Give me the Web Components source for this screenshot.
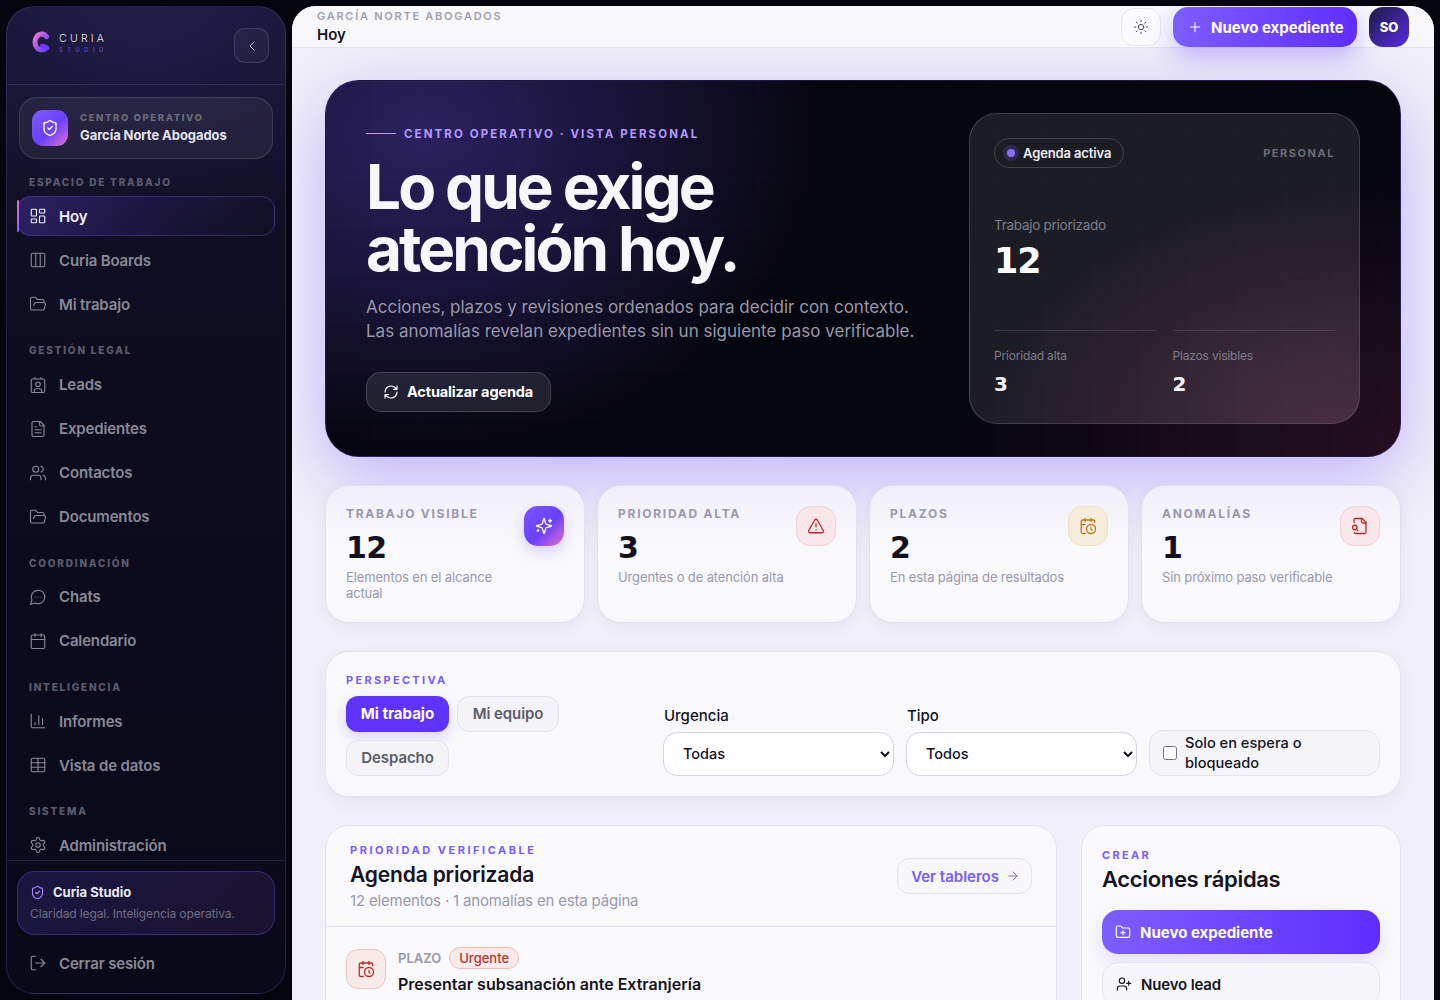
<!DOCTYPE html>
<html lang="es">
<head>
<meta charset="utf-8">
<title>Curia Studio</title>
<style>
    html, body { margin: 0; height: 100%; }
    body {
        background: #05050f;
        font-family: "Inter", "Noto Sans", sans-serif;
        overflow: hidden;
    }
</style>
</head>
<body>
<curia-app></curia-app>

<script>
(function() {
    'use strict';

    const FONT = '"Inter", "Noto Sans", sans-serif';

    const ICONS = {
        dashboard: '<rect x="3" y="3" width="7" height="9" rx="1"/><rect x="14" y="3" width="7" height="5" rx="1"/><rect x="14" y="12" width="7" height="9" rx="1"/><rect x="3" y="16" width="7" height="5" rx="1"/>',
        columns: '<rect x="3" y="3" width="18" height="18" rx="2"/><path d="M9 3v18M15 3v18"/>',
        folderOpen: '<path d="m6 14 1.5-2.9A2 2 0 0 1 9.24 10H20a2 2 0 0 1 1.94 2.5l-1.54 6a2 2 0 0 1-1.95 1.5H4a2 2 0 0 1-2-2V5a2 2 0 0 1 2-2h3.9a2 2 0 0 1 1.69.9l.81 1.2a2 2 0 0 0 1.67.9H18a2 2 0 0 1 2 2v2"/>',
        contact: '<path d="M16 2v2M8 2v2"/><rect x="3" y="4" width="18" height="18" rx="2"/><circle cx="12" cy="11" r="3"/><path d="M7 22v-2a3 3 0 0 1 3-3h4a3 3 0 0 1 3 3v2"/>',
        file: '<path d="M15 2H6a2 2 0 0 0-2 2v16a2 2 0 0 0 2 2h12a2 2 0 0 0 2-2V7Z"/><path d="M14 2v4a2 2 0 0 0 2 2h4M10 9H8M16 13H8M16 17H8"/>',
        users: '<path d="M16 21v-2a4 4 0 0 0-4-4H6a4 4 0 0 0-4 4v2"/><circle cx="9" cy="7" r="4"/><path d="M22 21v-2a4 4 0 0 0-3-3.87M16 3.13a4 4 0 0 1 0 7.75"/>',
        chat: '<path d="M7.9 20A9 9 0 1 0 4 16.1L2 22Z"/><path d="M8 12h.01M12 12h.01M16 12h.01"/>',
        calendar: '<rect x="3" y="4" width="18" height="18" rx="2"/><path d="M16 2v4M8 2v4M3 10h18"/>',
        chart: '<path d="M3 3v16a2 2 0 0 0 2 2h16M18 17V9M13 17V5M8 17v-3"/>',
        table: '<rect x="3" y="3" width="18" height="18" rx="2"/><path d="M3 9h18M3 15h18M12 3v18"/>',
        gear: '<path d="M12.22 2h-.44a2 2 0 0 0-2 2v.18a2 2 0 0 1-1 1.73l-.43.25a2 2 0 0 1-2 0l-.15-.08a2 2 0 0 0-2.73.73l-.22.38a2 2 0 0 0 .73 2.73l.15.1a2 2 0 0 1 1 1.72v.51a2 2 0 0 1-1 1.74l-.15.09a2 2 0 0 0-.73 2.73l.22.38a2 2 0 0 0 2.73.73l.15-.08a2 2 0 0 1 2 0l.43.25a2 2 0 0 1 1 1.73V20a2 2 0 0 0 2 2h.44a2 2 0 0 0 2-2v-.18a2 2 0 0 1 1-1.73l.43-.25a2 2 0 0 1 2 0l.15.08a2 2 0 0 0 2.73-.73l.22-.39a2 2 0 0 0-.73-2.73l-.15-.08a2 2 0 0 1-1-1.74v-.5a2 2 0 0 1 1-1.74l.15-.09a2 2 0 0 0 .73-2.73l-.22-.38a2 2 0 0 0-2.73-.73l-.15.08a2 2 0 0 1-2 0l-.43-.25a2 2 0 0 1-1-1.73V4a2 2 0 0 0-2-2z"/><circle cx="12" cy="12" r="3"/>',
        shield: '<path d="M20 13c0 5-3.5 7.5-7.66 8.95a1 1 0 0 1-.67-.01C7.5 20.5 4 18 4 13V6a1 1 0 0 1 1-1c2 0 4.5-1.2 6.24-2.72a1.17 1.17 0 0 1 1.52 0C14.51 3.81 17 5 19 5a1 1 0 0 1 1 1z"/><path d="m9 12 2 2 4-4"/>',
        logout: '<path d="M9 21H5a2 2 0 0 1-2-2V5a2 2 0 0 1 2-2h4M21 12H9"/><path d="m16 17 5-5-5-5"/>',
        chevronLeft: '<path d="m15 18-6-6 6-6"/>',
        sun: '<circle cx="12" cy="12" r="4"/><path d="M12 2v2M12 20v2M4.93 4.93l1.41 1.41M17.66 17.66l1.41 1.41M2 12h2M20 12h2M6.34 17.66l-1.41 1.41M19.07 4.93l-1.41 1.41"/>',
        plus: '<path d="M5 12h14M12 5v14"/>',
        refresh: '<path d="M3 12a9 9 0 0 1 9-9 9.75 9.75 0 0 1 6.74 2.74L21 8M21 3v5h-5M21 12a9 9 0 0 1-9 9 9.75 9.75 0 0 1-6.74-2.74L3 16M8 16H3v5"/>',
        sparkles: '<path d="M9.937 15.5A2 2 0 0 0 8.5 14.063l-6.135-1.582a.5.5 0 0 1 0-.962L8.5 9.936A2 2 0 0 0 9.937 8.5l1.582-6.135a.5.5 0 0 1 .963 0L14.063 8.5A2 2 0 0 0 15.5 9.937l6.135 1.581a.5.5 0 0 1 0 .964L15.5 14.063a2 2 0 0 0-1.437 1.437l-1.582 6.135a.5.5 0 0 1-.963 0z"/><path d="M20 3v4M22 5h-4M4 17v2M5 18H3"/>',
        alert: '<path d="m21.73 18-8-14a2 2 0 0 0-3.48 0l-8 14A2 2 0 0 0 4 21h16a2 2 0 0 0 1.73-3"/><path d="M12 9v4M12 17h.01"/>',
        calendarClock: '<path d="M21 7.5V6a2 2 0 0 0-2-2H5a2 2 0 0 0-2 2v14a2 2 0 0 0 2 2h3.5M16 2v4M8 2v4M3 10h5M17.5 17.5 16 16.3V14"/><circle cx="16" cy="16" r="6"/>',
        fileSearch: '<path d="M14 2v4a2 2 0 0 0 2 2h4"/><path d="M4.268 21a2 2 0 0 0 1.727 1H18a2 2 0 0 0 2-2V7l-5-5H6a2 2 0 0 0-2 2v3M9 18l-1.5-1.5"/><circle cx="5" cy="14" r="3"/>',
        folderPlus: '<path d="M12 10v6M9 13h6"/><path d="M20 20a2 2 0 0 0 2-2V8a2 2 0 0 0-2-2h-7.9a2 2 0 0 1-1.69-.9L9.6 3.9A2 2 0 0 0 7.93 3H4a2 2 0 0 0-2 2v13a2 2 0 0 0 2 2Z"/>',
        userPlus: '<path d="M16 21v-2a4 4 0 0 0-4-4H6a4 4 0 0 0-4 4v2"/><circle cx="9" cy="7" r="4"/><path d="M19 8v6M22 11h-6"/>',
        arrowRight: '<path d="M5 12h14M12 5l7 7-7 7"/>'
    };

    function define(name, cls) {
        if (!customElements.get(name)) customElements.define(name, cls);
    }

    function shadow(el, html) {
        el.attachShadow({ mode: 'open' }).innerHTML = html;
    }

    class CIcon extends HTMLElement {
        connectedCallback() {
            const size = this.getAttribute('size') || 18;
            const width = this.getAttribute('stroke') || 1.5;
            shadow(this, `
                <style>:host { display: inline-flex; flex: none; }</style>
                <svg width="${size}" height="${size}" viewBox="0 0 24 24" fill="none" stroke="currentColor"
                     stroke-width="${width}" stroke-linecap="round" stroke-linejoin="round">${ICONS[this.getAttribute('name')] || ''}</svg>`);
        }
    }

    class NavLabel extends HTMLElement {
        constructor() {
            super();
            shadow(this, `
                <style>
                    :host {
                        display: block;
                        margin: 20px 0 8px 22px;
                        height: 12.3px;
                        line-height: 12.3px;
                        font-size: 10px;
                        font-weight: 800;
                        letter-spacing: .18em;
                        color: #5d5c6d;
                        white-space: nowrap;
                    }
                </style>
                <slot></slot>`);
        }
    }

    class NavItem extends HTMLElement {
        connectedCallback() {
            shadow(this, `
                <style>
                    :host {
                        display: flex;
                        align-items: center;
                        gap: 12px;
                        height: 40px;
                        margin: 0 10px 4px;
                        padding: 0 11px;
                        box-sizing: border-box;
                        border-radius: 14px;
                        font-size: 15px;
                        font-weight: 600;
                        letter-spacing: -.01em;
                        color: #8a8996;
                        border: 1px solid transparent;
                        position: relative;
                        white-space: nowrap;
                    }
                    :host([active]) {
                        color: #f2f1f8;
                        background: linear-gradient(90deg, rgba(112, 76, 255, .28), rgba(112, 76, 255, .08) 60%, rgba(112, 76, 255, .02));
                        border-color: rgba(134, 108, 255, .26);
                    }
                    .accent { display: none; }
                    :host([active]) .accent {
                        display: block;
                        position: absolute;
                        left: -1px; top: 3px; bottom: 3px;
                        width: 2px;
                        border-radius: 2px;
                        background: linear-gradient(180deg, #e36fd0, #8a62ff);
                    }
                </style>
                <span class="accent"></span>
                <c-icon name="${this.getAttribute('icon')}" size="18"></c-icon>
                <slot></slot>`);
        }
    }

    class CuriaLogo extends HTMLElement {
        constructor() {
            super();
            shadow(this, `
                <style>
                    :host { display: flex; align-items: center; gap: 9px; align-self: flex-start; margin-top: 24px; }
                    .txt { display: flex; flex-direction: column; gap: 3px; padding-top: 1px; }
                    .name { font-size: 10.5px; font-weight: 300; letter-spacing: .31em; line-height: 11px; color: #e8e7f2; }
                    .sub { font-size: 5.5px; letter-spacing: .85em; line-height: 6px; color: #6a45c9; font-weight: 500; }
                </style>
                <svg width="18" height="22" viewBox="0 0 18 22" fill="none">
                    <defs>
                        <linearGradient id="lg" x1="0" y1="0" x2="1" y2="1">
                            <stop offset="0" stop-color="#ea7ad6"/><stop offset=".5" stop-color="#a557ec"/><stop offset="1" stop-color="#6a3cff"/>
                        </linearGradient>
                    </defs>
                    <path d="M14.6 5.6A6 6 0 0 0 10 3C6 3 3 6.6 3 11s3 8 7 8c1.9 0 3.5-.7 4.7-2" stroke="url(#lg)" stroke-width="5" stroke-linecap="round"/>
                    <path d="M10 14.6c1.6 0 3 .5 4.7 2.4" stroke="#6a3cff" stroke-width="4" stroke-linecap="round"/>
                </svg>
                <div class="txt"><span class="name">CURIA</span><span class="sub">STUDIO</span></div>`);
        }
    }

    class SideNav extends HTMLElement {
        constructor() {
            super();
            shadow(this, `
                <style>
                    :host {
                        display: flex;
                        flex-direction: column;
                        flex: none;
                        width: 280px;
                        height: 988px;
                        box-sizing: border-box;
                        border: 1px solid rgba(122, 104, 220, .24);
                        border-radius: 28px;
                        overflow: hidden;
                        background:
                            radial-gradient(420px 300px at 50% 0, rgba(72, 58, 160, .26), transparent 75%),
                            linear-gradient(180deg, #15132c 0, #0d0c1f 35%, #0a0919 100%);
                        color: #fff;
                    }
                    header {
                        flex: none;
                        height: 78px;
                        box-sizing: border-box;
                        padding: 0 16px 0 25px;
                        display: flex;
                        align-items: center;
                        justify-content: space-between;
                        border-bottom: 1px solid rgba(122, 104, 220, .22);
                    }
                    .collapse {
                        width: 35px; height: 35px;
                        box-sizing: border-box;
                        display: grid; place-items: center;
                        border: 1px solid rgba(255, 255, 255, .12);
                        border-radius: 11px;
                        background: rgba(255, 255, 255, .04);
                        color: #b9b8c6;
                    }
                    nav { flex: 1; min-height: 0; overflow: hidden; padding-top: 12px; }
                    .org {
                        margin: 0 12px -3px;
                        height: 62px;
                        box-sizing: border-box;
                        display: flex;
                        align-items: center;
                        gap: 12px;
                        padding: 0 12px;
                        border: 1px solid rgba(255, 255, 255, .12);
                        border-radius: 18px;
                        background: rgba(255, 255, 255, .06);
                    }
                    .org-ico {
                        width: 36px; height: 36px;
                        display: grid; place-items: center;
                        border-radius: 11px;
                        background: linear-gradient(135deg, #7f5cff 0, #6a40ff 55%, #e46fc9 100%);
                    }
                    .org small {
                        display: block;
                        font-size: 9.5px;
                        font-weight: 800;
                        letter-spacing: .17em;
                        color: #6c6b7b;
                        line-height: 13px;
                        margin-top: -2px;
                    }
                    .org b {
                        display: block;
                        font-size: 13px;
                        font-weight: 700;
                        letter-spacing: -.005em;
                        color: #e4e3ee;
                        margin-top: 3px;
                        line-height: 16px;
                    }
                    footer {
                        flex: none;
                        box-sizing: border-box;
                        height: 133px;
                        padding-top: 10px;
                        border-top: 1px solid rgba(122, 104, 220, .22);
                    }
                    .brand {
                        margin: 0 10px 8px;
                        height: 64px;
                        box-sizing: border-box;
                        padding: 12px 12px 0;
                        border: 1px solid rgba(112, 84, 230, .35);
                        border-radius: 18px;
                        background: linear-gradient(135deg, #1a1640, #1b1230);
                    }
                    .brand div { display: flex; align-items: center; gap: 8px; color: #a98bff; height: 16px; margin-bottom: 6px; }
                    .brand b { font-size: 13px; font-weight: 700; color: #e8e7f2; }
                    .brand p { margin: 0; font-size: 12px; letter-spacing: -.01em; color: #6f6e80; line-height: 16px; white-space: nowrap; }
                </style>
                <header>
                    <curia-logo></curia-logo>
                    <div class="collapse"><c-icon name="chevronLeft" size="16"></c-icon></div>
                </header>
                <nav>
                    <div class="org">
                        <div class="org-ico"><c-icon name="shield" size="18" stroke="1.8" style="color:#fff"></c-icon></div>
                        <div><small>CENTRO OPERATIVO</small><b>García Norte Abogados</b></div>
                    </div>
                    <nav-label>ESPACIO DE TRABAJO</nav-label>
                    <nav-item icon="dashboard" active>Hoy</nav-item>
                    <nav-item icon="columns">Curia Boards</nav-item>
                    <nav-item icon="folderOpen">Mi trabajo</nav-item>
                    <nav-label>GESTIÓN LEGAL</nav-label>
                    <nav-item icon="contact">Leads</nav-item>
                    <nav-item icon="file">Expedientes</nav-item>
                    <nav-item icon="users">Contactos</nav-item>
                    <nav-item icon="folderOpen">Documentos</nav-item>
                    <nav-label>COORDINACIÓN</nav-label>
                    <nav-item icon="chat">Chats</nav-item>
                    <nav-item icon="calendar">Calendario</nav-item>
                    <nav-label>INTELIGENCIA</nav-label>
                    <nav-item icon="chart">Informes</nav-item>
                    <nav-item icon="table">Vista de datos</nav-item>
                    <nav-label>SISTEMA</nav-label>
                    <nav-item icon="gear">Administración</nav-item>
                </nav>
                <footer>
                    <div class="brand">
                        <div><c-icon name="shield" size="15" stroke="1.8"></c-icon><b>Curia Studio</b></div>
                        <p>Claridad legal. Inteligencia operativa.</p>
                    </div>
                    <nav-item icon="logout">Cerrar sesión</nav-item>
                </footer>`);
        }
    }

    class TopBar extends HTMLElement {
        constructor() {
            super();
            shadow(this, `
                <style>
                    :host {
                        display: flex;
                        align-items: center;
                        justify-content: space-between;
                        flex: none;
                        height: 42px;
                        box-sizing: border-box;
                        padding: 0 25px;
                        background: #f7f7fc;
                        border-bottom: 1px solid #e3e2ee;
                        position: relative;
                    }
                    .where small {
                        display: block;
                        font-size: 11px;
                        font-weight: 600;
                        letter-spacing: .158em;
                        color: #a09fb0;
                        line-height: 14px;
                    }
                    .where b {
                        display: block;
                        font-size: 15px;
                        font-weight: 600;
                        color: #14131f;
                        line-height: 18px;
                        margin-top: 3px;
                    }
                    .actions { display: flex; align-items: center; height: 40px; align-self: flex-start; margin-top: 1px; }
                    .theme {
                        width: 40px; height: 38px;
                        box-sizing: border-box;
                        margin-right: 12px;
                        display: grid; place-items: center;
                        color: #4e4d5c;
                        background: #fbfbfe;
                        border: 1px solid #e6e5f0;
                        border-radius: 13px;
                    }
                    .new {
                        display: flex; align-items: center; gap: 8px;
                        height: 40px;
                        width: 184px;
                        box-sizing: border-box;
                        padding: 0 14px;
                        margin-right: 12px;
                        border-radius: 15px;
                        color: #fff;
                        font-size: 15px;
                        font-weight: 700;
                        white-space: nowrap;
                        background: linear-gradient(90deg, #7c5eff, #5f2eff);
                        box-shadow: 0 10px 24px rgba(98, 58, 255, .32);
                    }
                    .avatar {
                        width: 40px; height: 40px;
                        display: grid; place-items: center;
                        border-radius: 14px;
                        color: #fff;
                        font-size: 13px;
                        font-weight: 800;
                        background: linear-gradient(135deg, #1d1a48, #5a2ce0);
                    }
                </style>
                <div class="where"><small>GARCÍA NORTE ABOGADOS</small><b>Hoy</b></div>
                <div class="actions">
                    <div class="theme"><c-icon name="sun" size="16"></c-icon></div>
                    <div class="new"><c-icon name="plus" size="16" stroke="1.6"></c-icon>Nuevo expediente</div>
                    <div class="avatar">SO</div>
                </div>`);
        }
    }

    class HeroPanel extends HTMLElement {
        constructor() {
            super();
            shadow(this, `
                <style>
                    :host {
                        display: grid;
                        grid-template-columns: minmax(0, 1fr) 391px;
                        align-items: center;
                        box-sizing: border-box;
                        height: 377px;
                        padding: 0 40px;
                        border: 1px solid rgba(60, 44, 150, .4);
                        border-radius: 34px;
                        color: #fff;
                        flex: none;
                        box-shadow: 0 20px 70px rgba(112, 76, 255, .38);
                        background:
                            linear-gradient(rgba(255, 255, 255, .012) 1px, transparent 1px) 0 0 / 48px 48px,
                            linear-gradient(90deg, rgba(255, 255, 255, .012) 1px, transparent 1px) 0 0 / 48px 48px,
                            radial-gradient(400px 320px at 9% 14%, rgba(72, 54, 160, .56), transparent 100%),
                            radial-gradient(440px 280px at 100% 100%, rgba(92, 30, 66, .36), transparent 100%),
                            #06060f;
                    }
                    .eyebrow {
                        display: flex; align-items: center; gap: 8px;
                        font-size: 11.5px;
                        font-weight: 700;
                        letter-spacing: .182em;
                        line-height: 14px;
                        color: #b49aff;
                        position: relative;
                        top: 1px;
                    }
                    .eyebrow i { width: 30px; height: 1px; background: linear-gradient(90deg, #e08ae0, #b49aff); }
                    h1 {
                        margin: 16px 0 15px;
                        max-width: 420px;
                        font-size: 62px;
                        line-height: 62px;
                        font-weight: 700;
                        letter-spacing: -.047em;
                        color: #f7f6fb;
                    }
                    p {
                        margin: 0 0 29px;
                        font-size: 17px;
                        line-height: 24px;
                        color: #9a98a8;
                        white-space: nowrap;
                    }
                    .btn {
                        display: inline-flex; align-items: center; gap: 8px;
                        height: 40px;
                        width: 185px;
                        box-sizing: border-box;
                        padding: 0 16px;
                        border-radius: 15px;
                        border: 1px solid rgba(255, 255, 255, .16);
                        background: rgba(255, 255, 255, .09);
                        font-size: 14.5px;
                        font-weight: 700;
                        letter-spacing: -.01em;
                        white-space: nowrap;
                    }
                    .panel {
                        height: 311px;
                        box-sizing: border-box;
                        padding: 24px;
                        border: 1px solid rgba(255, 255, 255, .16);
                        border-radius: 28px;
                        background:
                            radial-gradient(320px 220px at 90% 100%, rgba(150, 90, 130, .2), transparent 100%),
                            rgba(255, 255, 255, .09);
                    }
                    .row { display: flex; align-items: center; justify-content: space-between; height: 30px; }
                    .pill {
                        display: flex; align-items: center; gap: 4px;
                        height: 30px;
                        box-sizing: border-box;
                        padding: 0 12px 1px 8px;
                        border: 1px solid rgba(255, 255, 255, .16);
                        border-radius: 15px;
                        font-size: 13px;
                        font-weight: 600;
                        letter-spacing: -.01em;
                        color: #ecebf3;
                    }
                    .dot { width: 8px; height: 8px; border-radius: 50%; background: #8a6cff; box-shadow: 0 0 0 4px rgba(138, 108, 255, .18); margin: 1px 4px 0; }
                    .tag { font-size: 11px; font-weight: 700; letter-spacing: .14em; color: #6f6d7c; padding-bottom: 1px; }
                    .lbl { font-size: 13.5px; letter-spacing: -.02em; color: #7f7d8c; line-height: 18px; }
                    .big { font-family: "DejaVu Sans", sans-serif; font-size: 35px; font-weight: 700; line-height: 40px; margin-top: 7px; letter-spacing: -.03em; }
                    .split { display: grid; grid-template-columns: 1fr 1fr; gap: 16px; margin-top: 49px; }
                    .split > div { border-top: 1px solid rgba(255, 255, 255, .13); padding-top: 17px; }
                    .split .lbl { font-size: 12px; letter-spacing: -.015em; line-height: 16px; }
                    .num { font-family: "DejaVu Sans", sans-serif; font-size: 20px; font-weight: 700; line-height: 24px; margin-top: 8px; color: #f4f3f9; }
                </style>
                <div>
                    <div class="eyebrow"><i></i>CENTRO OPERATIVO · VISTA PERSONAL</div>
                    <h1>Lo que exige atención hoy.</h1>
                    <p>Acciones, plazos y revisiones ordenados para decidir con contexto.<br>Las anomalías revelan expedientes sin un siguiente paso verificable.</p>
                    <div class="btn"><c-icon name="refresh" size="16" stroke="1.8"></c-icon>Actualizar agenda</div>
                </div>
                <div class="panel">
                    <div class="row">
                        <div class="pill"><span class="dot"></span>Agenda activa</div>
                        <div class="tag">PERSONAL</div>
                    </div>
                    <div class="lbl" style="margin-top:48px">Trabajo priorizado</div>
                    <div class="big">12</div>
                    <div class="split">
                        <div><div class="lbl">Prioridad alta</div><div class="num">3</div></div>
                        <div><div class="lbl">Plazos visibles</div><div class="num">2</div></div>
                    </div>
                </div>`);
        }
    }

    const TONES = {
        brand: 'background:linear-gradient(135deg,#7a55ff 0,#6a40ff 55%,#e46fc9 100%);color:#fff;border:0;box-shadow:0 6px 14px rgba(110,70,255,.22);',
        red: 'background:#f8e6e8;color:#b92a2a;border:1px solid #f2d2d5;',
        amber: 'background:#f6ecdc;color:#b87722;border:1px solid #f1e2c6;'
    };

    class StatCard extends HTMLElement {
        connectedCallback() {
            const tone = TONES[this.getAttribute('tone')];
            shadow(this, `
                <style>
                    :host {
                        display: flex;
                        justify-content: space-between;
                        box-sizing: border-box;
                        height: 138px;
                        padding: 20px;
                        border: 1px solid #e2dff1;
                        border-radius: 24px;
                        background: linear-gradient(180deg, #f1effa 0, #f9f9fc 45%);
                        box-shadow: 0 4px 14px rgba(80, 70, 150, .08);
                    }
                    .label { font-size: 12px; font-weight: 700; letter-spacing: .145em; line-height: 14px; margin-top: 1px; color: #9a98ae; white-space: nowrap; }
                    .value { font-family: "DejaVu Sans", sans-serif; font-size: 30px; font-weight: 700; line-height: 36px; margin-top: 9px; letter-spacing: -.02em; color: #12111d; }
                    .desc { font-size: 13px; line-height: 16px; letter-spacing: -.01em; margin-top: 3px; color: #9a98ae; }
                    .ico { flex: none; width: 40px; height: 40px; box-sizing: border-box; display: grid; place-items: center; border-radius: 14px; ${tone} }
                </style>
                <div>
                    <div class="label">${this.getAttribute('label')}</div>
                    <div class="value">${this.getAttribute('value')}</div>
                    <div class="desc"><slot></slot></div>
                </div>
                <div class="ico"><c-icon name="${this.getAttribute('icon')}" size="18" stroke="1.7"></c-icon></div>`);
        }
    }

    class FilterBar extends HTMLElement {
        constructor() {
            super();
            shadow(this, `
                <style>
                    :host {
                        display: grid;
                        grid-template-columns: minmax(0, 1fr) 231px 231px 231px;
                        column-gap: 12px;
                        align-items: end;
                        flex: none;
                        height: 146px;
                        box-sizing: border-box;
                        padding: 0 20px 20px;
                        border: 1px solid #e5e3f1;
                        border-radius: 24px;
                        background: #f9f9fc;
                        box-shadow: 0 6px 16px rgba(80, 70, 150, .07);
                        color: #14131f;
                    }
                    .eyebrow { font-size: 11px; font-weight: 700; letter-spacing: .21em; line-height: 14px; color: #7a5cff; margin-bottom: 9px; }
                    .tabs { display: flex; flex-wrap: wrap; gap: 8px; }
                    .tab {
                        height: 36px;
                        box-sizing: border-box;
                        display: flex; align-items: center; justify-content: center;
                        padding-bottom: 1px;
                        border: 1px solid #e4e3ee;
                        border-radius: 12px;
                        background: #f3f3f8;
                        font-size: 15px;
                        font-weight: 600;
                        letter-spacing: -.005em;
                        color: #5c5b68;
                        white-space: nowrap;
                    }
                    .tab.on { color: #fff; border-color: transparent; background: #5f33ff; font-weight: 700; box-shadow: 0 6px 14px rgba(98, 58, 255, .18); letter-spacing: 0; }
                    label { display: block; font-size: 15px; font-weight: 500; line-height: 20px; margin: 0 0 6px 1px; }
                    select {
                        width: 100%;
                        height: 44px;
                        box-sizing: border-box;
                        padding: 0 15px 2px;
                        border: 1px solid #d4d2e4;
                        border-radius: 14px;
                        background-color: #fff;
                        font: 500 14.5px ${FONT};
                        color: #14131f;
                    }
                    .check {
                        display: flex; align-items: center; gap: 8px;
                        height: 46px;
                        box-sizing: border-box;
                        padding: 0 11px;
                        border: 1px solid #e4e3ee;
                        border-radius: 14px;
                        background: #f4f4f9;
                        font-size: 14.6px;
                        font-weight: 500;
                        line-height: 20px;
                    }
                    input { width: 14px; height: 14px; margin: 0 0 0 2px; flex: none; }
                </style>
                <div>
                    <div class="eyebrow">PERSPECTIVA</div>
                    <div class="tabs">
                        <div class="tab on" style="width:103px">Mi trabajo</div>
                        <div class="tab" style="width:102px">Mi equipo</div>
                        <div class="tab" style="width:103px">Despacho</div>
                    </div>
                </div>
                <div><label>Urgencia</label><select><option>Todas</option></select></div>
                <div><label>Tipo</label><select><option>Todos</option></select></div>
                <div class="check"><input type="checkbox"><span>Solo en espera o<br>bloqueado</span></div>`);
        }
    }

    class AgendaCard extends HTMLElement {
        constructor() {
            super();
            shadow(this, `
                <style>
                    :host {
                        display: block;
                        box-sizing: border-box;
                        height: 320px;
                        border: 1px solid #e5e3f1;
                        border-radius: 24px;
                        background: #f9f9fc;
                        color: #14131f;
                    }
                    .head {
                        display: flex; align-items: center; justify-content: space-between;
                        height: 101px;
                        box-sizing: border-box;
                        padding: 0 24px;
                        border-bottom: 1px solid #e5e3f1;
                    }
                    .eyebrow { font-size: 11px; font-weight: 700; letter-spacing: .23em; line-height: 14px; color: #7a5cff; margin-top: 2px; }
                    h2 { margin: 4px 0 2px; font-size: 21px; line-height: 28px; font-weight: 600; letter-spacing: -.008em; }
                    .sub { font-size: 15px; line-height: 20px; color: #9a98ae; letter-spacing: -.012em; }
                    .link {
                        display: flex; align-items: center; gap: 7px;
                        height: 36px;
                        box-sizing: border-box;
                        padding: 0 11px 0 13px;
                        border: 1px solid #e4e3ee;
                        border-radius: 12px;
                        background: #f7f7fb;
                        color: #7a5cff;
                        font-size: 15px;
                        font-weight: 600;
                    }
                    .item { display: flex; gap: 12px; padding: 20px 20px 0; }
                    .ico {
                        flex: none;
                        margin-top: 2px;
                        width: 40px; height: 40px;
                        box-sizing: border-box;
                        display: grid; place-items: center;
                        border-radius: 12px;
                        background: #fae9e9;
                        border: 1px solid #efc3c3;
                        color: #b92a2a;
                    }
                    .meta { display: flex; align-items: center; gap: 8px; height: 22px; }
                    .type { font-size: 13px; font-weight: 600; color: #9a98ae; }
                    .badge {
                        height: 22px; box-sizing: border-box;
                        display: flex; align-items: center;
                        padding: 0 9px;
                        border: 1px solid #efbdb9;
                        border-radius: 11px;
                        background: #fbeaea;
                        color: #b8352f;
                        font-size: 13px;
                        font-weight: 500;
                    }
                    .title { font-size: 16px; font-weight: 600; line-height: 22px; margin-top: 4px; }
                </style>
                <div class="head">
                    <div>
                        <div class="eyebrow">PRIORIDAD VERIFICABLE</div>
                        <h2>Agenda priorizada</h2>
                        <div class="sub">12 elementos · 1 anomalías en esta página</div>
                    </div>
                    <div class="link">Ver tableros<c-icon name="arrowRight" size="14" stroke="1.7"></c-icon></div>
                </div>
                <div class="item">
                    <div class="ico"><c-icon name="calendarClock" size="18" stroke="1.7"></c-icon></div>
                    <div>
                        <div class="meta"><span class="type">PLAZO</span><span class="badge">Urgente</span></div>
                        <div class="title">Presentar subsanación ante Extranjería</div>
                    </div>
                </div>`);
        }
    }

    class QuickActions extends HTMLElement {
        constructor() {
            super();
            shadow(this, `
                <style>
                    :host {
                        display: block;
                        box-sizing: border-box;
                        height: 320px;
                        padding: 22px 20px 20px;
                        border: 1px solid #e5e3f1;
                        border-radius: 24px;
                        background: #f9f9fc;
                        color: #14131f;
                    }
                    .eyebrow { font-size: 11px; font-weight: 700; letter-spacing: .21em; line-height: 14px; color: #7a5cff; }
                    h2 { margin: 3px 0 17px; font-size: 22px; line-height: 28px; font-weight: 600; letter-spacing: -.015em; }
                    .act {
                        display: flex; align-items: center; gap: 9px;
                        height: 44px;
                        box-sizing: border-box;
                        padding: 0 13px;
                        border-radius: 16px;
                        font-size: 15px;
                        margin-bottom: 8px;
                        letter-spacing: -.01em;
                        font-weight: 600;
                        border: 1px solid #e4e3ee;
                        background: #f7f7fb;
                    }
                    .act.main { color: #fff; border: 0; font-weight: 700; letter-spacing: 0; background: linear-gradient(90deg, #7c5eff, #5f2eff); box-shadow: 0 8px 20px rgba(98, 58, 255, .14); }
                </style>
                <div class="eyebrow">CREAR</div>
                <h2>Acciones rápidas</h2>
                <div class="act main"><c-icon name="folderPlus" size="16" stroke="1.7"></c-icon>Nuevo expediente</div>
                <div class="act"><c-icon name="userPlus" size="16" stroke="1.7"></c-icon>Nuevo lead</div>`);
        }
    }

    class CuriaApp extends HTMLElement {
        constructor() {
            super();
            shadow(this, `
                <style>
                    :host {
                        display: flex;
                        gap: 6px;
                        height: 100vh;
                        box-sizing: border-box;
                        padding: 6px 6px 0;
                        font-family: ${FONT};
                        overflow: hidden;
                    }
                    main {
                        flex: 1;
                        min-width: 0;
                        display: flex;
                        flex-direction: column;
                        border-radius: 24px 24px 0 0;
                        overflow: hidden;
                        background: #f1f0f8;
                    }
                    .scroll {
                        flex: 1;
                        min-height: 0;
                        overflow: hidden;
                        display: flex;
                        flex-direction: column;
                        gap: 28px;
                        padding: 32px 33px 0;
                    }
                    .stats { display: grid; grid-template-columns: repeat(4, 1fr); gap: 12px; flex: none; }
                    .lower { display: grid; grid-template-columns: 732px 320px; gap: 24px; flex: none; }
                </style>
                <side-nav></side-nav>
                <main>
                    <top-bar></top-bar>
                    <div class="scroll">
                        <hero-panel></hero-panel>
                        <div class="stats">
                            <stat-card label="TRABAJO VISIBLE" value="12" icon="sparkles" tone="brand">Elementos en el alcance actual</stat-card>
                            <stat-card label="PRIORIDAD ALTA" value="3" icon="alert" tone="red">Urgentes o de atención alta</stat-card>
                            <stat-card label="PLAZOS" value="2" icon="calendarClock" tone="amber">En esta página de resultados</stat-card>
                            <stat-card label="ANOMALÍAS" value="1" icon="fileSearch" tone="red">Sin próximo paso verificable</stat-card>
                        </div>
                        <filter-bar></filter-bar>
                        <div class="lower">
                            <agenda-card></agenda-card>
                            <quick-actions></quick-actions>
                        </div>
                    </div>
                </main>`);
        }
    }

    define('c-icon', CIcon);
    define('nav-label', NavLabel);
    define('nav-item', NavItem);
    define('curia-logo', CuriaLogo);
    define('side-nav', SideNav);
    define('top-bar', TopBar);
    define('hero-panel', HeroPanel);
    define('stat-card', StatCard);
    define('filter-bar', FilterBar);
    define('agenda-card', AgendaCard);
    define('quick-actions', QuickActions);
    define('curia-app', CuriaApp);
})();
</script>
</body>
</html>
